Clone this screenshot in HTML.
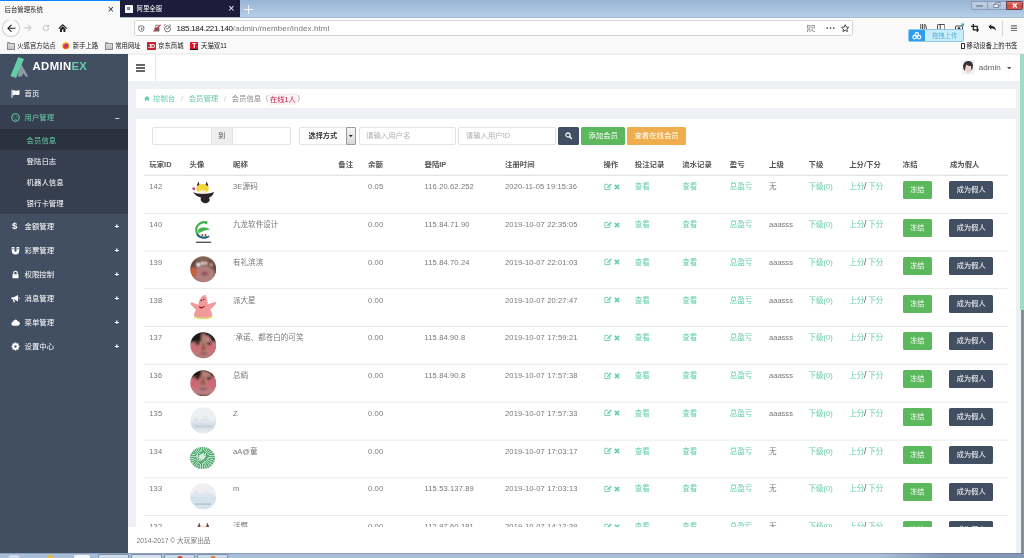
<!DOCTYPE html>
<html lang="zh-CN">
<head>
<meta charset="utf-8">
<title>后台管理系统</title>
<style>
*{box-sizing:border-box;margin:0;padding:0}
html,body{width:1024px;height:558px;overflow:hidden;background:#eff0f4}
body{opacity:.9999}
body{position:relative;font-family:"Liberation Sans","Noto Sans CJK SC",sans-serif;font-size:7.47px;color:#7a7676;line-height:1.42857}
.abs{position:absolute}
/* ---------- browser chrome ---------- */
#tabbar{left:0;top:0;width:1024px;height:18px;background:linear-gradient(#98b4d3,#b7d0ea)}
#tab1{z-index:2;left:0;top:0;width:119.5px;height:20px;background:#f9f9fa;border-top:1px solid #0a84ff;color:#222;font-size:6.4px;line-height:17px;padding-left:4.5px}
#tab2{left:119.5px;top:0;width:120.5px;height:17.5px;background:#1d1d3b;color:#fff;font-size:6.4px;line-height:18.600px;padding-left:17px}
.tabx{position:absolute;right:5.500px;top:0;font-size:10.500px;line-height:17px;font-weight:normal}
#navbar{left:0;top:17px;width:1024px;height:21px;background:linear-gradient(#a9bccc 0,#a9bccc 1px,#f8fdfe 1px,#f8fdfe 3px,#f9f9fa 3px)}
#urlbar{left:133.5px;top:20.200px;width:719px;height:16.200px;background:#fff;border:1px solid #d4d4d8;border-radius:1.5px;font-size:8px;line-height:16.400px;color:#111;padding-left:42px;white-space:nowrap;letter-spacing:-0.25px}
#urlbar span{color:#777;letter-spacing:0.1px}
#bmbar{left:0;top:38px;width:1024px;height:17px;background:linear-gradient(#f9f9fa 0,#f9f9fa 15px,#f1f1f2 15px,#f1f1f2 17px);font-size:6.4px;color:#222;line-height:14px}
.bm{position:absolute;top:0;white-space:nowrap}
.fold{position:absolute;top:5.200px;width:8.400px;height:6.400px;border:0.7px solid #8b8b8f;background:linear-gradient(#dcdcdf,#c2c2c6);border-radius:0.5px}
.fold:before{content:"";position:absolute;left:-0.7px;top:-1.900px;width:3.600px;height:1.500px;background:#9a9a9e;border-radius:.5px .5px 0 0}
/* ---------- sidebar ---------- */
#side{left:0;top:54px;width:128px;height:499px;background:#424f63}
.mi{position:absolute;left:0;width:128px;height:24px;color:#fff;line-height:25.600px;padding-left:24.5px;font-size:7.4px}
.mi .pl{position:absolute;left:114.5px;top:0;font-weight:bold;font-size:8px}
.sub{position:absolute;left:0;width:128px;height:21.2px;line-height:23px;padding-left:26.6px;color:#fff;font-size:7.4px}
.ico{position:absolute;left:10.5px;top:7.5px;width:9px;height:9px}
/* ---------- header ---------- */
#hdr{left:128px;top:55px;width:896px;height:25.800px;background:#fff}
/* ---------- content ---------- */
#bc{left:136px;top:89px;width:880px;height:19px;background:#fff;border-radius:1.5px;line-height:19.800px;padding-left:17px;font-size:7.400px;color:#8a8a8a;white-space:nowrap}
#bc code{font-family:inherit;font-size:7.300px;color:#c7254e;background:#f9f2f4;padding:1.500px 1.300px;border-radius:1.500px;margin:0}
#bc a{color:#65cea7}
#bc i{font-style:normal;color:#c4c4c4;padding:0 5.700px}
#panel{left:136px;top:118.800px;width:880px;height:440px;background:#fff;border-radius:1.5px}
.inp{position:absolute;top:126.9px;height:17.8px;background:#fff;border:1px solid #e2e2e4;border-radius:2px;font-size:7.400px;line-height:15.8px;color:#b0b0b0;padding-left:6.5px}
.btn{position:absolute;color:#fff;border-radius:1.6px;text-align:center;white-space:nowrap}
/* ---------- table ---------- */
#tbl{position:absolute;left:0;top:0;width:1024px;height:527px;overflow:hidden;font-size:7.55px}
.th{position:absolute;left:143.900px;top:154px;width:863.900px;height:22px;border-bottom:1px solid #e4e4e4;box-shadow:0 -1px 0 #f6f6f6 inset}
.th b{position:absolute;top:0;margin-left:-143.900px;line-height:21.400px;color:#555;font-size:7.400px;white-space:nowrap}
.tr{position:absolute;left:143.900px;width:863.900px;height:37.750px}
.ln{position:absolute;left:143.900px;width:863.900px;height:2px}
.tr span{position:absolute;top:5.700px;margin-left:-143.900px;line-height:11px;white-space:nowrap}
.tr a{color:#65cea7}
.tr .n{letter-spacing:0.130px}
.tr em{font-style:normal;color:#555;font-size:8.600px;line-height:8px;margin:0 -0.300px 0 -0.200px}
.tr .av{position:absolute;margin-left:0;left:45.700px;top:5.300px;width:26.600px;height:26.600px}
.b1{position:absolute;left:758.900px;top:5.700px;font-style:normal;background:#5cb85c;color:#fff;border-radius:1.600px;width:29px;height:18px;line-height:18px;text-align:center;font-size:7px}
.b2{position:absolute;left:805.500px;top:5.700px;font-style:normal;background:#424f63;color:#fff;border-radius:1.600px;width:43.700px;height:18px;line-height:18px;text-align:center;font-size:7.200px}
.a3{border-radius:50%;background:radial-gradient(circle at 36% 30%,#fff 0,#fff 5%,rgba(255,255,255,0) 11%),radial-gradient(circle at 56% 24%,#f3e3d6 0,rgba(243,227,214,0) 12%),radial-gradient(circle at 55% 68%,#c99c98 0,#b3807e 28%,rgba(179,128,126,0) 52%),radial-gradient(circle at 14% 62%,#c8523a 0,rgba(200,82,58,0) 30%),#5e3c34}
.a5{border-radius:50%;background:radial-gradient(ellipse 9% 16% at 52% 58%,#a0674e 0,#a0674e 60%,rgba(160,103,78,0) 100%),linear-gradient(#1a1212 0,#2a1a1b 30%,#d98a8c 46%,#d3787a 75%,#b76a6a 100%)}
.a6{border-radius:50%;background:radial-gradient(ellipse 9% 16% at 50% 46%,#b07a62 0,#b07a62 60%,rgba(176,122,98,0) 100%),linear-gradient(#2a1a1c 0,#6a3d42 20%,#d6838a 40%,#cc6d78 70%,#3a2228 96%)}
.a7{border-radius:50%;background:linear-gradient(#eef0f3 0,#e6eaef 55%,#d3dee7 76%,#e0e7ed 100%)}
.a8{border-radius:50%;width:25.600px!important;height:22.600px!important;margin-top:1.400px!important;background:radial-gradient(circle at 48% 45%,#dcebe0 0,#dcebe0 14%,rgba(220,235,224,0) 18%),repeating-conic-gradient(from 0deg at 48% 45%,#58ad76 0 7deg,#b5dcc2 7deg 12deg)}
.a9{border-radius:50%;background:linear-gradient(#eeeff2 0,#e8eaee 45%,#d6e3ea 56%,#d2e1e8 85%,#dde8ee 100%)}
.ed{width:8.200px;height:7.600px;vertical-align:-1px}.xx{width:6px;height:6px;margin-left:2.200px;vertical-align:-0.400px}
#foot{left:128px;top:526.800px;width:888px;height:26.200px;background:#fff;font-size:6.700px;line-height:27px;padding-left:8.500px;color:#7a7676}
#task{left:0;top:552.800px;width:1024px;height:6px;background:linear-gradient(90deg,rgba(0,0,0,0) 0,rgba(0,0,0,0) 86%,rgba(60,80,110,.35) 92%,rgba(60,80,110,.35) 100%),linear-gradient(#6f8098 0,#a9c0db 18%,#a5bdd9 100%)}
</style>
</head>
<body>
<!-- browser chrome -->
<div id="tabbar" class="abs"></div>
<div id="tab1" class="abs">后台管理系统<span class="tabx">×</span></div>
<div id="tab2" class="abs"><span class="abs" style="left:5px;top:4.500px;width:8px;height:8px;background:#f4f4f6;border-radius:.5px"></span><span class="abs" style="left:7px;top:6.500px;width:3px;height:3.500px;background:#7a8aa0"></span>阿里全服<span class="tabx">×</span></div>
<svg id="plus" class="abs" style="left:243.500px;top:4.500px" width="9" height="9" viewBox="0 0 9 9"><path d="M4.500 0v9M0 4.500h9" stroke="#fff" stroke-width="0.900"/></svg>
<div id="navbar" class="abs"></div>
<div id="urlbar" class="abs">185.184.221.140<span>/admin/member/index.html</span></div>
<div id="bmbar" class="abs"></div>
<!-- window controls -->
<div class="abs" style="left:971.300px;top:1.300px;width:51.300px;height:8.300px;border-radius:1.500px;background:linear-gradient(#bfcfe4,#afc4dd);border:0.600px solid #8a9db8"></div>
<div class="abs" style="left:1006px;top:1.300px;width:16.600px;height:8.300px;border-radius:0 1.500px 1.500px 0;background:linear-gradient(#e2776c,#d2443d 55%,#d85a50);border:0.700px solid #6e3c46"></div>
<div class="abs" style="left:987.400px;top:1.300px;width:0.600px;height:8.300px;background:#8a9db8"></div>
<div class="abs" style="left:976px;top:4.600px;width:7.200px;height:2.800px;background:#fbfcfe;border:0.400px solid #8493a8;border-radius:.8px"></div>
<svg class="abs" style="left:992.500px;top:2.200px" width="8" height="6.200" viewBox="0 0 9 7"><rect x="3" y="0.800" width="5" height="3.600" fill="#dfe7f2" stroke="#5a6a80" stroke-width=".8"/><rect x="1" y="2.600" width="5" height="3.600" fill="#eef2f8" stroke="#5a6a80" stroke-width=".8"/></svg>
<svg class="abs" style="left:1011.600px;top:3px" width="5.600" height="4.800" viewBox="0 0 7 6"><path d="M1 .5l5 5M6 .5l-5 5" stroke="#fff" stroke-width="1.700"/></svg>
<!-- nav buttons -->
<div class="abs" style="left:1.600px;top:19px;width:18.200px;height:17.600px;border-radius:50%;border:0.800px solid #cfcfd3;background:#fcfcfc"></div>
<svg class="abs" style="left:6.500px;top:23.800px" width="9" height="8.600" viewBox="0 0 18 17"><path d="M9 1.500L2 8.500l7 7M2.500 8.500h14.500" fill="none" stroke="#222" stroke-width="2.200"/></svg>
<svg class="abs" style="left:24.200px;top:24.200px" width="8" height="7.600" viewBox="0 0 18 17"><path d="M9 1.500l7 7-7 7M15.500 8.500h-14.500" fill="none" stroke="#bcbcc0" stroke-width="2.200"/></svg>
<svg class="abs" style="left:41.800px;top:24.200px" width="8" height="8" viewBox="0 0 18 18"><path d="M15 9a6 6 0 1 1-2-4.500" fill="none" stroke="#bcbcc0" stroke-width="2.200"/><path d="M16 1v6h-6z" fill="#bcbcc0"/></svg>
<svg class="abs" style="left:57.800px;top:23.800px" width="9.400" height="8.600" viewBox="0 0 19 17"><path d="M1.500 9l8-7.500 8 7.500" fill="none" stroke="#222" stroke-width="2.300"/><path d="M4 9.500v6.500h11v-6.500l-5.500-5z M8 11h3v5h-3z" fill="#222" fill-rule="evenodd"/></svg>
<!-- url bar icons -->
<svg class="abs" style="left:138px;top:24.600px" width="6.600" height="7.800" viewBox="0 0 13 15"><path d="M6.500 1.200l5 1.600v4.200c0 3.500-2.300 5.800-5 6.800-2.700-1-5-3.300-5-6.800V2.800z" fill="none" stroke="#555" stroke-width="1.600" stroke-linejoin="round"/><path d="M6.500 4.200v6.800c1.300-.8 2.200-2.200 2.200-4V5z" fill="#555"/></svg>
<svg class="abs" style="left:152.800px;top:24.300px" width="8" height="8.400" viewBox="0 0 16 17"><rect x="3" y="7" width="10" height="8" rx="1" fill="#666"/><path d="M5 7V5a3 3 0 0 1 6 0v2" fill="none" stroke="#666" stroke-width="1.800"/><path d="M1 15.500L15 1.500" stroke="#d7264c" stroke-width="2.400"/></svg>
<svg class="abs" style="left:163px;top:24.200px" width="9" height="8.600" viewBox="0 0 18 17"><circle cx="9" cy="9.500" r="6" fill="none" stroke="#666" stroke-width="1.800"/><path d="M6 8l3 2 5-6" fill="none" stroke="#666" stroke-width="1.800"/><path d="M2 3l3-2M16 3l-3-2" stroke="#666" stroke-width="1.800"/></svg>
<svg class="abs" style="left:807px;top:24.500px" width="8" height="7.500" viewBox="0 0 16 15"><g fill="none" stroke="#8a8a8e" stroke-width="1.600"><rect x="1" y="1" width="5" height="5"/><rect x="10" y="1" width="5" height="5"/><rect x="1" y="9.500" width="5" height="5"/></g><path d="M9 9h3v3h-3zM12.500 12h3v3h-3z" fill="#8a8a8e"/></svg>
<svg class="abs" style="left:825.500px;top:27px" width="9" height="2.200" viewBox="0 0 18 4.400"><circle cx="2.500" cy="2.200" r="1.700" fill="#444"/><circle cx="9" cy="2.200" r="1.700" fill="#444"/><circle cx="15.500" cy="2.200" r="1.700" fill="#444"/></svg>
<svg class="abs" style="left:840.800px;top:24.300px" width="8.400" height="8.400" viewBox="0 0 17 17"><path d="M8.500 1.500l2.200 4.700 5 .6-3.700 3.500 1 5-4.500-2.500-4.500 2.500 1-5L1.300 6.800l5-.6z" fill="none" stroke="#333" stroke-width="1.800" stroke-linejoin="round"/></svg>
<!-- toolbar right icons -->
<svg class="abs" style="left:919.500px;top:24.300px" width="7.500" height="7" viewBox="0 0 15 14"><path d="M1.500 0v14M5 0v14M8.500 0v14M11 1l3 13" stroke="#333" stroke-width="1.700"/></svg>
<svg class="abs" style="left:936.500px;top:24.400px" width="8.400" height="7.400" viewBox="0 0 17 15"><rect x="1" y="1" width="15" height="13" rx="1.500" fill="none" stroke="#333" stroke-width="1.800"/><path d="M6.500 1v13" stroke="#333" stroke-width="1.800"/></svg>
<svg class="abs" style="left:954.500px;top:22.500px" width="9.500" height="9.500" viewBox="0 0 19 19"><rect x="1" y="6" width="14" height="11" rx="1.500" fill="none" stroke="#333" stroke-width="1.800"/><circle cx="8" cy="11.500" r="2.800" fill="#333"/><circle cx="15.500" cy="3.500" r="2.800" fill="#2ab3a6"/></svg>
<svg class="abs" style="left:970.800px;top:24.200px" width="8.600" height="8" viewBox="0 0 17 16"><path d="M4.500 0v11.500h12.500M0 4.500h12.500v11.500" fill="none" stroke="#222" stroke-width="2.500"/></svg>
<svg class="abs" style="left:988px;top:24.200px" width="8.400" height="7.600" viewBox="0 0 17 15"><path d="M1 5.500l5.500-5v3.200c6 0 9.500 3 9.500 10.300-1.800-4-4.500-5.600-9.500-5.600v3.100z" fill="#222"/></svg>
<div class="abs" style="left:1002.200px;top:20.500px;width:0.600px;height:15px;background:#d4d4d8"></div>
<svg class="abs" style="left:1010.600px;top:24.800px" width="6.800" height="6.600" viewBox="0 0 14 13"><path d="M0 1.500h14M0 6.500h14M0 11.500h14" stroke="#333" stroke-width="1.800"/></svg>
<!-- bookmarks -->
<div class="abs" style="left:0;top:38px;width:1024px;height:16px;font-size:6.400px;line-height:16.600px;color:#1a1a1a">
<i class="fold" style="left:6.500px"></i><span class="bm" style="left:17.200px">火狐官方站点</span>
<svg class="abs" style="left:62px;top:4.300px" width="7.600" height="7.600" viewBox="0 0 16 16"><circle cx="8" cy="8" r="7.500" fill="#ff9a1f"/><circle cx="8" cy="8.600" r="5.600" fill="#e8402a"/><circle cx="9.200" cy="7" r="3" fill="#7e3cc0"/><path d="M1 6c2-4 5-5.500 9-5-3 .5-4.500 2-5 4z" fill="#ffcb3d"/></svg>
<span class="bm" style="left:72.700px">新手上路</span>
<i class="fold" style="left:104.500px"></i><span class="bm" style="left:115.200px">常用网址</span>
<span class="abs" style="left:147.100px;top:4.300px;width:8.800px;height:8px;background:#c0242c;color:#fff;font-size:5.600px;line-height:8.200px;font-weight:bold;text-align:center;letter-spacing:-0.400px;border-radius:.5px">JD</span>
<span class="bm" style="left:158px">京东商城</span>
<span class="abs" style="left:190.100px;top:4.100px;width:8.300px;height:8.200px;background:#e0122a;border-bottom:1.600px solid #1a1a1a;color:#fff;font-size:6.600px;line-height:7px;font-weight:bold;text-align:center;border-radius:.5px">T</span>
<span class="bm" style="left:201.100px">天猫双11</span>
<span class="abs" style="left:960.600px;top:5px;width:4px;height:6.400px;border:0.700px solid #333;border-radius:.6px"></span>
<span class="bm" style="left:966.600px;font-size:6.350px">移动设备上的书签</span>
</div>
<!-- baidu upload widget -->
<div class="abs" style="left:908.100px;top:29.200px;width:55.800px;height:13.200px;border-radius:1.600px;background:#c7ecfa;border:0.600px solid #8fc7e6;overflow:hidden">
<div class="abs" style="left:-0.600px;top:-0.600px;width:16.300px;height:12.700px;background:#2d9df0"></div>
<svg class="abs" style="left:3px;top:2.200px" width="9.600" height="7.800" viewBox="0 0 19 16"><g fill="none" stroke="#fff" stroke-width="2.400"><circle cx="9.500" cy="5" r="3.600"/><circle cx="5" cy="10.500" r="3.600"/><circle cx="14" cy="10.500" r="3.600"/></g></svg>
<div class="abs" style="left:22.900px;top:0;font-size:6.300px;line-height:12px;color:#5db4d6;white-space:nowrap">拖拽上传</div>
</div>

<!-- sidebar -->
<div id="side" class="abs"></div>
<!-- logo -->
<svg class="abs" style="left:9px;top:56px" width="22" height="24" viewBox="0 0 22 24"><polygon points="12.2,8 19.3,20.5 16.4,20.5 14.4,17.2 12.5,20.5 8.5,20.5" fill="#8e99a8"/><polygon points="9.3,1 15,3 7,22 1.5,20" fill="#65cea7"/></svg>
<div class="abs" style="left:32.6px;top:58.6px;font-size:11.3px;line-height:14px;font-weight:bold;color:#fff;letter-spacing:0.360px">ADMIN<span style="color:#65cea7">EX</span></div>
<!-- menu -->
<div class="mi" style="top:81px"><svg class="ico" viewBox="0 0 18 18"><path d="M1 1.5h2v16h-2z M3.5 3c3-2 5 1.500 8 .5s4-1 5.500-1.500v9c-2 1-3.500 1.500-6 1s-4.500-.5-7.500 1z" fill="#fff"/></svg>首页</div>
<div class="abs" style="left:0;top:105px;width:128px;height:109px;background:#353f4f"></div>
<div class="abs" style="left:0;top:128.6px;width:128px;height:21.2px;background:#2a323f"></div>
<div class="mi" style="top:105px;color:#65cea7"><svg class="ico" viewBox="0 0 18 18"><circle cx="9" cy="9" r="7.400" fill="none" stroke="#65cea7" stroke-width="2.100"/><circle cx="6.500" cy="7.200" r="1" fill="#65cea7"/><circle cx="11.500" cy="7.200" r="1" fill="#65cea7"/><path d="M5.800 10.800c1 2.400 5.400 2.400 6.400 0" fill="none" stroke="#65cea7" stroke-width="1.200"/></svg>用户管理<span class="pl" style="color:#fff;left:115px">–</span></div>
<div class="sub" style="top:128.6px;color:#65cea7">会员信息</div>
<div class="sub" style="top:149.8px">登陆日志</div>
<div class="sub" style="top:171px">机器人信息</div>
<div class="sub" style="top:192.2px">银行卡管理</div>
<div class="mi" style="top:214px"><span class="abs" style="left:12px;top:-0.800px;font-weight:bold;font-size:9.600px">$</span>金额管理<span class="pl">+</span></div>
<div class="mi" style="top:238px"><svg class="ico" viewBox="0 0 18 18"><path d="M1.500 2h5.500v7.500a2 2 0 0 0 4 0V2h5.500v7.500a7.500 7.500 0 0 1-15 0z" fill="#fff"/><path d="M1.500 5.600h5.500M11 5.600h5.500" stroke="#424f63" stroke-width="1.300"/></svg>彩票管理<span class="pl">+</span></div>
<div class="mi" style="top:262px"><svg class="ico" viewBox="0 0 18 18"><path d="M3 8.500h12v8h-12z" fill="#fff"/><path d="M5.500 9V6a3.500 3.500 0 0 1 7 0v3" fill="none" stroke="#fff" stroke-width="2.200"/></svg>权限控制<span class="pl">+</span></div>
<div class="mi" style="top:286px"><svg class="ico" viewBox="0 0 18 18"><path d="M1 6.500h4.500l8.500-4.500v13l-8.500-4.500h-4.500z" fill="#fff"/><path d="M3.500 11l1.500 5.500h3l-1.800-5.500z" fill="#fff"/><path d="M15.500 6.500a2.500 2.500 0 0 1 0 4" stroke="#fff" stroke-width="1.500" fill="none"/></svg>消息管理<span class="pl">+</span></div>
<div class="mi" style="top:310px"><svg class="ico" viewBox="0 0 18 18"><path d="M4.500 15.500a4 4 0 0 1-.6-7.900 5 5 0 0 1 9.600-1.200 4.600 4.600 0 0 1 .5 9.100z" fill="#fff"/></svg>菜单管理<span class="pl">+</span></div>
<div class="mi" style="top:334px"><svg class="ico" viewBox="0 0 18 18"><circle cx="9" cy="9" r="4.600" fill="none" stroke="#fff" stroke-width="3.400"/><g stroke="#fff" stroke-width="3"><path d="M9 1v16M1 9h16M3.300 3.300l11.400 11.400M14.700 3.300L3.300 14.700"/></g><circle cx="9" cy="9" r="2.300" fill="#424f63"/></svg>设置中心<span class="pl">+</span></div>

<!-- header -->
<div id="hdr" class="abs"></div>
<svg class="abs" style="left:135.800px;top:64px" width="9.400" height="8" viewBox="0 0 19 16"><path d="M0 1.800h19M0 8h19M0 14.200h19" stroke="#333" stroke-width="3"/></svg>
<div class="abs" style="left:155.300px;top:54px;width:0.600px;height:27px;background:#e8e8ec"></div>
<!-- user -->
<svg class="abs" style="left:960.500px;top:60px" width="14" height="14.600" viewBox="0 0 28 29"><rect width="28" height="29" fill="#f3f5fa"/><ellipse cx="14.500" cy="18" rx="5.600" ry="8.500" fill="#ead3ca"/><path d="M4.500 16c-1.500-8 3-14 10-14s11 5 9 13c-.5 3-1.500 5-2.500 6.500l-1-9.500c-3 0-7-1-9-3-1 2-2.500 6-3 12.500-2-1-3-3-3.500-5.500z" fill="#3a3036"/></svg>
<div class="abs" style="left:978.800px;top:61.800px;font-size:8.100px;line-height:12px;color:#606060">admin</div>
<svg class="abs" style="left:1006.600px;top:66.600px" width="4.400" height="2.600" viewBox="0 0 9 5"><path d="M0 0h9l-4.500 5z" fill="#555"/></svg>

<!-- content -->
<div id="bc" class="abs"><svg class="abs" style="left:8.400px;top:6.800px" width="6" height="5.400" viewBox="0 0 12 11"><path d="M6 0l6 5.500h-1.800v5.500h-2.700v-3.500h-3v3.500h-2.700v-5.500h-1.800z" fill="#65cea7"/></svg><a>控制台</a><i>/</i><a>会员管理</a><i>/</i>会员信息（<code>在线1人</code>）</div>
<div id="panel" class="abs"></div>
<!-- search form -->
<div class="inp" style="left:152.200px;width:138.500px"></div>
<div class="abs" style="left:210.500px;top:126.900px;width:22px;height:17.800px;background:#eee;border:1px solid #e2e2e4;text-align:center;line-height:15.800px;font-size:7.200px;color:#555">到</div>
<div class="inp" style="left:299.200px;width:56.400px;color:#333;font-weight:bold;padding-left:8.300px;font-size:7.200px">选择方式</div>
<div class="abs" style="left:346px;top:126.900px;width:9.600px;height:17.800px;background:linear-gradient(#f4f4f4,#d8d8d8);border:0.800px solid #999;border-radius:1px"></div>
<svg class="abs" style="left:349px;top:134.800px" width="3.600" height="2.200" viewBox="0 0 7 4"><path d="M0 0h7l-3.500 4z" fill="#111"/></svg>
<div class="inp" style="left:358.500px;width:97px">请输入用户名</div>
<div class="inp" style="left:458.300px;width:97.500px">请输入用户ID</div>
<div class="btn" style="left:558.300px;top:126.900px;width:20.700px;height:17.800px;background:#424f63"></div>
<svg class="abs" style="left:565px;top:132.300px" width="7.400" height="7.400" viewBox="0 0 15 15"><circle cx="6" cy="6" r="4.300" fill="none" stroke="#fff" stroke-width="2.300"/><path d="M9 9l5 5" stroke="#fff" stroke-width="2.800"/></svg>
<div class="btn" style="left:581.300px;top:126.900px;width:43.700px;height:17.800px;background:#5cb85c;line-height:17.800px;font-size:7.400px">添加会员</div>
<div class="btn" style="left:627px;top:126.900px;width:59.200px;height:17.800px;background:#f0ad4e;line-height:17.800px;font-size:7.400px">查看在线会员</div>

<div id="tbl">
<div class="th"><b style="left:149.3px">玩家ID</b><b style="left:189.5px">头像</b><b style="left:233px">昵称</b><b style="left:338.25px">备注</b><b style="left:368px">余额</b><b style="left:424.5px">登陆IP</b><b style="left:505px">注册时间</b><b style="left:603.5px">操作</b><b style="left:634.75px">投注记录</b><b style="left:682.25px">流水记录</b><b style="left:729.75px">盈亏</b><b style="left:769px">上级</b><b style="left:808.5px">下级</b><b style="left:849.2px">上分/下分</b><b style="left:902.8px">冻结</b><b style="left:949.9px">成为假人</b></div>
<div class="tr" style="top:175.7px"><span class="n" style="left:149.3px">142</span><span class="n" style="left:233px">3E源码</span><span class="n" style="left:368px">0.05</span><span class="n" style="left:424.5px">116.20.62.252</span><span class="n" style="left:505px">2020-11-05 19:15:36</span><span style="left:603.5px"><svg class="ed" viewBox="0 0 15 14"><path d="M11 7.500v4.500h-9.500v-9.500h6" fill="none" stroke="#65cea7" stroke-width="1.600"/><path d="M5.500 9.500l.7-2.800 6-6 2.100 2.100-6 6z" fill="#65cea7"/></svg><svg class="xx" viewBox="0 0 10 10"><path d="M1.500 1.500l7 7M8.500 1.500l-7 7" stroke="#65cea7" stroke-width="2.600"/></svg></span><span style="left:634.75px"><a>查看</a></span><span style="left:682.25px"><a>查看</a></span><span style="left:729.75px"><a>总盈亏</a></span><span style="left:769px">无</span><span style="left:808.5px"><a>下级(0)</a></span><span style="left:849.2px"><a>上分</a><em>/</em> <a>下分</a></span><svg class="av" viewBox="0 0 27 27"><path d="M8.400 .6l1.900 4.800h-3.400z M17 .6l1.700 4.800h-3.500z" fill="#2a2228"/><ellipse cx="12.700" cy="7.900" rx="6.400" ry="4.800" fill="#f2d638"/><ellipse cx="12.500" cy="11" rx="3.800" ry="1.900" fill="#f6ead8"/><path d="M3 11.200c3 1.500 6 2 9.700 2s7.500-.5 11.800-2c-1 3-3 5-5 5.500l.5 3c-1 2-3 3-4.500 2.800-2 0-4-1.500-4.700-3.300l.3-2.500c-3-.5-6-2.500-8.100-5.500z" fill="#2a2228"/><circle cx="3.800" cy="7.800" r="1.500" fill="#b8479a"/></svg><i class="b1">冻结</i><i class="b2">成为假人</i></div>
<div class="tr" style="top:213.45px"><span class="n" style="left:149.3px">140</span><span style="left:233px">九龙软件设计</span><span class="n" style="left:368px">0.00</span><span class="n" style="left:424.5px">115.84.71.90</span><span class="n" style="left:505px">2019-10-07 22:35:05</span><span style="left:603.5px"><svg class="ed" viewBox="0 0 15 14"><path d="M11 7.500v4.500h-9.500v-9.500h6" fill="none" stroke="#65cea7" stroke-width="1.600"/><path d="M5.500 9.500l.7-2.800 6-6 2.100 2.100-6 6z" fill="#65cea7"/></svg><svg class="xx" viewBox="0 0 10 10"><path d="M1.500 1.500l7 7M8.500 1.500l-7 7" stroke="#65cea7" stroke-width="2.600"/></svg></span><span style="left:634.75px"><a>查看</a></span><span style="left:682.25px"><a>查看</a></span><span style="left:729.75px"><a>总盈亏</a></span><span style="left:769px">aaasss</span><span style="left:808.5px"><a>下级(0)</a></span><span style="left:849.2px"><a>上分</a><em>/</em> <a>下分</a></span><svg class="av" viewBox="0 0 27 27"><path d="M17.500 3.500c-7-1.500-12 3.500-11 9 1 5 6 7.500 11 5.500" fill="none" stroke="#3fae4c" stroke-width="2.200"/><path d="M8 11c3-3.500 8-3.500 12.500-.5-4 1-8.500 2-11.500 4z" fill="#45b84b"/><path d="M12 2.500l3 1.500 3-1-1 2.500z" fill="#3fae4c"/><path d="M7 15.500c2 4 8.500 5 12.500 2" fill="none" stroke="#28589a" stroke-width="1.600"/><circle cx="12.600" cy="16.300" r="1" fill="#b03060"/><circle cx="15.800" cy="16.300" r="1" fill="#b03060"/><rect x="6" y="23" width="15.500" height="1.200" fill="#3a3a3a"/></svg><i class="b1">冻结</i><i class="b2">成为假人</i></div>
<div class="tr" style="top:251.2px"><span class="n" style="left:149.3px">139</span><span style="left:233px">有礼滨滨</span><span class="n" style="left:368px">0.00</span><span class="n" style="left:424.5px">115.84.70.24</span><span class="n" style="left:505px">2019-10-07 22:01:03</span><span style="left:603.5px"><svg class="ed" viewBox="0 0 15 14"><path d="M11 7.500v4.500h-9.500v-9.500h6" fill="none" stroke="#65cea7" stroke-width="1.600"/><path d="M5.500 9.500l.7-2.800 6-6 2.100 2.100-6 6z" fill="#65cea7"/></svg><svg class="xx" viewBox="0 0 10 10"><path d="M1.500 1.500l7 7M8.500 1.500l-7 7" stroke="#65cea7" stroke-width="2.600"/></svg></span><span style="left:634.75px"><a>查看</a></span><span style="left:682.25px"><a>查看</a></span><span style="left:729.75px"><a>总盈亏</a></span><span style="left:769px">aaasss</span><span style="left:808.5px"><a>下级(0)</a></span><span style="left:849.2px"><a>上分</a><em>/</em> <a>下分</a></span><svg class="av" viewBox="0 0 27 27"><defs><clipPath id="c3"><circle cx="13.500" cy="13.500" r="13.200"/></clipPath><filter id="bl" x="-20%" y="-20%" width="140%" height="140%"><feGaussianBlur stdDeviation="0.900"/></filter></defs><g clip-path="url(#c3)"><g filter="url(#bl)"><rect x="-3" y="-3" width="33" height="33" fill="#6b4a40"/><rect x="-3" y="-3" width="33" height="7" fill="#86675a"/><ellipse cx="14.500" cy="19.500" rx="11" ry="9.500" fill="#b07f7a"/><ellipse cx="3.500" cy="16.500" rx="4" ry="5" fill="#c8623c"/><circle cx="8.500" cy="8.800" r="1.900" fill="#fff"/><circle cx="12.600" cy="7.200" r="1.700" fill="#f8eadf"/><circle cx="16.200" cy="7.400" r="1.600" fill="#f3dfd2"/><circle cx="21.500" cy="8.800" r="1.300" fill="#e6cdbd"/><ellipse cx="14.800" cy="17.800" rx="3.200" ry="2" fill="#8e4a58"/></g></g></svg><i class="b1">冻结</i><i class="b2">成为假人</i></div>
<div class="tr" style="top:288.95px"><span class="n" style="left:149.3px">138</span><span style="left:233px">派大星</span><span class="n" style="left:368px">0.00</span><span class="n" style="left:505px">2019-10-07 20:27:47</span><span style="left:603.5px"><svg class="ed" viewBox="0 0 15 14"><path d="M11 7.500v4.500h-9.500v-9.500h6" fill="none" stroke="#65cea7" stroke-width="1.600"/><path d="M5.500 9.500l.7-2.800 6-6 2.100 2.100-6 6z" fill="#65cea7"/></svg><svg class="xx" viewBox="0 0 10 10"><path d="M1.500 1.500l7 7M8.500 1.500l-7 7" stroke="#65cea7" stroke-width="2.600"/></svg></span><span style="left:634.75px"><a>查看</a></span><span style="left:682.25px"><a>查看</a></span><span style="left:729.75px"><a>总盈亏</a></span><span style="left:769px">aaasss</span><span style="left:808.5px"><a>下级(0)</a></span><span style="left:849.2px"><a>上分</a><em>/</em> <a>下分</a></span><svg class="av" viewBox="0 0 27 27"><path d="M15.500 .8c1.500 2 2.200 5.500 2.700 9.500l7-2.200c1.200 0 1.600 1 1 2l-5.700 6c1.500 2 2 4.200 2 6.400-3.500 2.500-14.500 2.500-18.500 0 0-2.200 .8-4.500 2-6.400l-5.300-5.500c-.5-1 0-2 1.500-2l6.300 2.200c.5-4.500 3-9.500 7-10z" fill="#f09a9c"/><path d="M4.200 22c4 2.500 14.500 2.500 18.500 0l.3 1.800c-4 2.600-15 2.600-19.100 0z" fill="#dfe27c"/><path d="M8.800 12.500c2 1 4.500 1 6.500-.7-1 3.200-5.500 4.200-6.500.7z" fill="#a01818"/><circle cx="11.500" cy="6.500" r=".8" fill="#333"/><circle cx="14" cy="5.500" r=".8" fill="#333"/></svg><i class="b1">冻结</i><i class="b2">成为假人</i></div>
<div class="tr" style="top:326.7px"><span class="n" style="left:149.3px">137</span><span style="left:233px">`承诺、都苍白的可笑</span><span class="n" style="left:368px">0.00</span><span class="n" style="left:424.5px">115.84.90.8</span><span class="n" style="left:505px">2019-10-07 17:59:21</span><span style="left:603.5px"><svg class="ed" viewBox="0 0 15 14"><path d="M11 7.500v4.500h-9.500v-9.500h6" fill="none" stroke="#65cea7" stroke-width="1.600"/><path d="M5.500 9.500l.7-2.800 6-6 2.100 2.100-6 6z" fill="#65cea7"/></svg><svg class="xx" viewBox="0 0 10 10"><path d="M1.500 1.500l7 7M8.500 1.500l-7 7" stroke="#65cea7" stroke-width="2.600"/></svg></span><span style="left:634.75px"><a>查看</a></span><span style="left:682.25px"><a>查看</a></span><span style="left:729.75px"><a>总盈亏</a></span><span style="left:769px">aaasss</span><span style="left:808.5px"><a>下级(0)</a></span><span style="left:849.2px"><a>上分</a><em>/</em> <a>下分</a></span><svg class="av" viewBox="0 0 27 27"><defs><clipPath id="c5"><circle cx="13.500" cy="13.500" r="13.200"/></clipPath></defs><g clip-path="url(#c5)"><g filter="url(#bl)"><rect x="-3" y="-3" width="33" height="33" fill="#bf8482"/><path d="M-3 -3h33v14c-3-1-5.500-1.500-7.500-1l-3.500-6h-5l-3.500 6c-3-.5-6 0-10.500 1z" fill="#1b1212"/><rect x="11.500" y="2" width="4.500" height="8" fill="#b08070"/><ellipse cx="5.500" cy="16.500" rx="5" ry="5" fill="#cb6f76"/><ellipse cx="22" cy="16.500" rx="5" ry="5" fill="#cb6f76"/><path d="M13.700 8l2.800 10.500h-5.600z" fill="#8f573f"/><ellipse cx="7.800" cy="11.800" rx="2.600" ry="1.400" fill="#1f1414"/><ellipse cx="19.400" cy="11.800" rx="2.600" ry="1.400" fill="#1f1414"/><ellipse cx="13.700" cy="21.500" rx="4" ry=".9" fill="#7a4444"/><rect x="-3" y="22.500" width="33" height="8" fill="#b67678"/></g></g></svg><i class="b1">冻结</i><i class="b2">成为假人</i></div>
<div class="tr" style="top:364.45px"><span class="n" style="left:149.3px">136</span><span style="left:233px">总绱</span><span class="n" style="left:368px">0.00</span><span class="n" style="left:424.5px">115.84.90.8</span><span class="n" style="left:505px">2019-10-07 17:57:38</span><span style="left:603.5px"><svg class="ed" viewBox="0 0 15 14"><path d="M11 7.500v4.500h-9.500v-9.500h6" fill="none" stroke="#65cea7" stroke-width="1.600"/><path d="M5.500 9.500l.7-2.800 6-6 2.100 2.100-6 6z" fill="#65cea7"/></svg><svg class="xx" viewBox="0 0 10 10"><path d="M1.500 1.500l7 7M8.500 1.500l-7 7" stroke="#65cea7" stroke-width="2.600"/></svg></span><span style="left:634.75px"><a>查看</a></span><span style="left:682.25px"><a>查看</a></span><span style="left:729.75px"><a>总盈亏</a></span><span style="left:769px">aaasss</span><span style="left:808.5px"><a>下级(0)</a></span><span style="left:849.2px"><a>上分</a><em>/</em> <a>下分</a></span><svg class="av" viewBox="0 0 27 27"><defs><clipPath id="c6"><circle cx="13.500" cy="13.500" r="13.200"/></clipPath></defs><g clip-path="url(#c6)"><g filter="url(#bl)"><rect x="-3" y="-3" width="33" height="33" fill="#bf7e80"/><path d="M-3 -3h33v11c-3-1-5.500-1.500-7.500-1l-3.500-5h-5l-3.500 5c-3-.5-6 0-10.500 1z" fill="#241618"/><rect x="11.500" y="1" width="4.500" height="6" fill="#b58474"/><ellipse cx="5" cy="13.500" rx="5.500" ry="5.500" fill="#cb6b74"/><ellipse cx="22.500" cy="13.500" rx="5.500" ry="5.500" fill="#cb6b74"/><path d="M13.200 4.500l2.900 10.500h-5.800z" fill="#93583f"/><ellipse cx="7.500" cy="8.400" rx="2.600" ry="1.400" fill="#1f1414"/><ellipse cx="19.200" cy="8.400" rx="2.600" ry="1.400" fill="#1f1414"/><ellipse cx="13.400" cy="19" rx="4.200" ry=".9" fill="#7a4444"/><path d="M-3 17l12 13h-12z" fill="#1d1416"/><path d="M8 24.500c4 1.500 9 1.500 13 0v5h-13z" fill="#4a2a2e"/></g></g></svg><i class="b1">冻结</i><i class="b2">成为假人</i></div>
<div class="tr" style="top:402.2px"><span class="n" style="left:149.3px">135</span><span style="left:233px">Z</span><span class="n" style="left:368px">0.00</span><span class="n" style="left:505px">2019-10-07 17:57:33</span><span style="left:603.5px"><svg class="ed" viewBox="0 0 15 14"><path d="M11 7.500v4.500h-9.500v-9.500h6" fill="none" stroke="#65cea7" stroke-width="1.600"/><path d="M5.500 9.500l.7-2.800 6-6 2.100 2.100-6 6z" fill="#65cea7"/></svg><svg class="xx" viewBox="0 0 10 10"><path d="M1.500 1.500l7 7M8.500 1.500l-7 7" stroke="#65cea7" stroke-width="2.600"/></svg></span><span style="left:634.75px"><a>查看</a></span><span style="left:682.25px"><a>查看</a></span><span style="left:729.75px"><a>总盈亏</a></span><span style="left:769px">aaasss</span><span style="left:808.5px"><a>下级(0)</a></span><span style="left:849.2px"><a>上分</a><em>/</em> <a>下分</a></span><svg class="av" viewBox="0 0 27 27"><defs><clipPath id="c7"><circle cx="13.500" cy="13.500" r="13.200"/></clipPath></defs><g clip-path="url(#c7)"><rect width="27" height="27" fill="#edf0f3"/><path d="M0 17l6-7 4 4 5-6 6 7 6-3v15h-27z" fill="#e0e7ed"/><rect y="16.500" width="27" height="6" fill="#d3dee7"/><rect x="5" y="19" width="17" height="1.200" fill="#b9c9d6"/><rect y="22.500" width="27" height="5" fill="#e2e9ee"/></g></svg><i class="b1">冻结</i><i class="b2">成为假人</i></div>
<div class="tr" style="top:439.95px"><span class="n" style="left:149.3px">134</span><span style="left:233px">aA@童</span><span class="n" style="left:368px">0.00</span><span class="n" style="left:505px">2019-10-07 17:03:17</span><span style="left:603.5px"><svg class="ed" viewBox="0 0 15 14"><path d="M11 7.500v4.500h-9.500v-9.500h6" fill="none" stroke="#65cea7" stroke-width="1.600"/><path d="M5.500 9.500l.7-2.800 6-6 2.100 2.100-6 6z" fill="#65cea7"/></svg><svg class="xx" viewBox="0 0 10 10"><path d="M1.500 1.500l7 7M8.500 1.500l-7 7" stroke="#65cea7" stroke-width="2.600"/></svg></span><span style="left:634.75px"><a>查看</a></span><span style="left:682.25px"><a>查看</a></span><span style="left:729.75px"><a>总盈亏</a></span><span style="left:769px">无</span><span style="left:808.5px"><a>下级(0)</a></span><span style="left:849.2px"><a>上分</a><em>/</em> <a>下分</a></span><span class="av a8"></span><i class="b1">冻结</i><i class="b2">成为假人</i></div>
<div class="tr" style="top:477.7px"><span class="n" style="left:149.3px">133</span><span style="left:233px">m</span><span class="n" style="left:368px">0.00</span><span class="n" style="left:424.5px">115.53.137.89</span><span class="n" style="left:505px">2019-10-07 17:03:13</span><span style="left:603.5px"><svg class="ed" viewBox="0 0 15 14"><path d="M11 7.500v4.500h-9.500v-9.500h6" fill="none" stroke="#65cea7" stroke-width="1.600"/><path d="M5.500 9.500l.7-2.800 6-6 2.100 2.100-6 6z" fill="#65cea7"/></svg><svg class="xx" viewBox="0 0 10 10"><path d="M1.500 1.500l7 7M8.500 1.500l-7 7" stroke="#65cea7" stroke-width="2.600"/></svg></span><span style="left:634.75px"><a>查看</a></span><span style="left:682.25px"><a>查看</a></span><span style="left:729.75px"><a>总盈亏</a></span><span style="left:769px">无</span><span style="left:808.5px"><a>下级(0)</a></span><span style="left:849.2px"><a>上分</a><em>/</em> <a>下分</a></span><svg class="av" viewBox="0 0 27 27"><defs><clipPath id="c9"><circle cx="13.500" cy="13.500" r="13.200"/></clipPath></defs><g clip-path="url(#c9)"><rect width="27" height="27" fill="#eeeff2"/><path d="M0 13l7-6 5 5 5-4 10 6v14h-27z" fill="#dfe6ec"/><rect y="14" width="27" height="13" fill="#d5e3ea"/><rect x="5" y="20.800" width="16" height="1.200" fill="#a9bcc8"/></g></svg><i class="b1">冻结</i><i class="b2">成为假人</i></div>
<div class="tr" style="top:515.45px"><span class="n" style="left:149.3px">132</span><span style="left:233px">活羁</span><span class="n" style="left:368px">0.00</span><span class="n" style="left:424.5px">112.97.60.181</span><span class="n" style="left:505px">2019-10-07 14:12:39</span><span style="left:603.5px"><svg class="ed" viewBox="0 0 15 14"><path d="M11 7.500v4.500h-9.500v-9.500h6" fill="none" stroke="#65cea7" stroke-width="1.600"/><path d="M5.500 9.500l.7-2.800 6-6 2.100 2.100-6 6z" fill="#65cea7"/></svg><svg class="xx" viewBox="0 0 10 10"><path d="M1.500 1.500l7 7M8.500 1.500l-7 7" stroke="#65cea7" stroke-width="2.600"/></svg></span><span style="left:634.75px"><a>查看</a></span><span style="left:682.25px"><a>查看</a></span><span style="left:729.75px"><a>总盈亏</a></span><span style="left:769px">无</span><span style="left:808.5px"><a>下级(0)</a></span><span style="left:849.2px"><a>上分</a><em>/</em> <a>下分</a></span><svg class="av" viewBox="0 0 27 27"><path d="M7.500 6l2-4.500 1.500 4.500z M16 6l1.800-4.500 1.700 4.500z" fill="#7a4a3a"/><path d="M10 6c1.500-1.500 5-1.500 7 0z" fill="#f0d9b5"/></svg><i class="b1">冻结</i><i class="b2">成为假人</i></div>
<u class="ln" style="top:212px;background:linear-gradient(rgb(254,254,254) 50%,rgb(235,235,235) 50%)"></u>
<u class="ln" style="top:250px;background:linear-gradient(rgb(245,245,245) 50%,rgb(244,244,244) 50%)"></u>
<u class="ln" style="top:288px;background:linear-gradient(rgb(236,236,236) 50%,rgb(253,253,253) 50%)"></u>
<u class="ln" style="top:326px;background:linear-gradient(rgb(234,234,234) 50%,rgb(255,255,255) 50%)"></u>
<u class="ln" style="top:363px;background:linear-gradient(rgb(253,253,253) 50%,rgb(236,236,236) 50%)"></u>
<u class="ln" style="top:401px;background:linear-gradient(rgb(249,249,249) 50%,rgb(240,240,240) 50%)"></u>
<u class="ln" style="top:439px;background:linear-gradient(rgb(247,247,247) 50%,rgb(242,242,242) 50%)"></u>
<u class="ln" style="top:477px;background:linear-gradient(rgb(240,240,240) 50%,rgb(249,249,249) 50%)"></u>
<u class="ln" style="top:514px;background:linear-gradient(rgb(254,254,254) 50%,rgb(235,235,235) 50%)"></u>
</div>
<div id="foot" class="abs">2014-2017 © 大玩家出品</div>
<div class="abs" style="left:1019.700px;top:54px;width:4.300px;height:256px;background:#9edcc5"></div>
<div class="abs" style="left:1020.800px;top:310px;width:3.200px;height:243px;background:#868d9b"></div>
<div id="task" class="abs"></div>
<div class="abs" style="left:97.500px;top:553.600px;width:31.500px;height:5px;background:rgba(255,255,255,.45);border:0.600px solid #7f93ad;border-radius:1px"></div>
<div class="abs" style="left:130.500px;top:553.600px;width:31.500px;height:5px;background:rgba(255,255,255,.55);border:0.600px solid #7f93ad;border-radius:1px"></div>
<div class="abs" style="left:163.500px;top:553.600px;width:31.500px;height:5px;background:rgba(255,255,255,.4);border:0.600px solid #7f93ad;border-radius:1px"></div>
<div class="abs" style="left:196.500px;top:553.600px;width:31.500px;height:5px;background:rgba(255,255,255,.4);border:0.600px solid #7f93ad;border-radius:1px"></div>
<div class="abs" style="left:74px;top:554.500px;width:16px;height:4px;background:#f4f6fa;border-radius:2px 2px 0 0"></div>
<div class="abs" style="left:8px;top:554.800px;width:12px;height:4px;background:#cfdcec;border-radius:6px 6px 0 0"></div>
<div class="abs" style="left:47px;top:555px;width:6px;height:3px;background:#e8b94a;border-radius:2px 2px 0 0"></div>
<div class="abs" style="left:177px;top:555.500px;width:6px;height:3px;background:#d8452f;border-radius:3px 3px 0 0"></div>
<div class="abs" style="left:210px;top:555.500px;width:6px;height:3px;background:#e8742f;border-radius:3px 3px 0 0"></div>
</body>
</html>
